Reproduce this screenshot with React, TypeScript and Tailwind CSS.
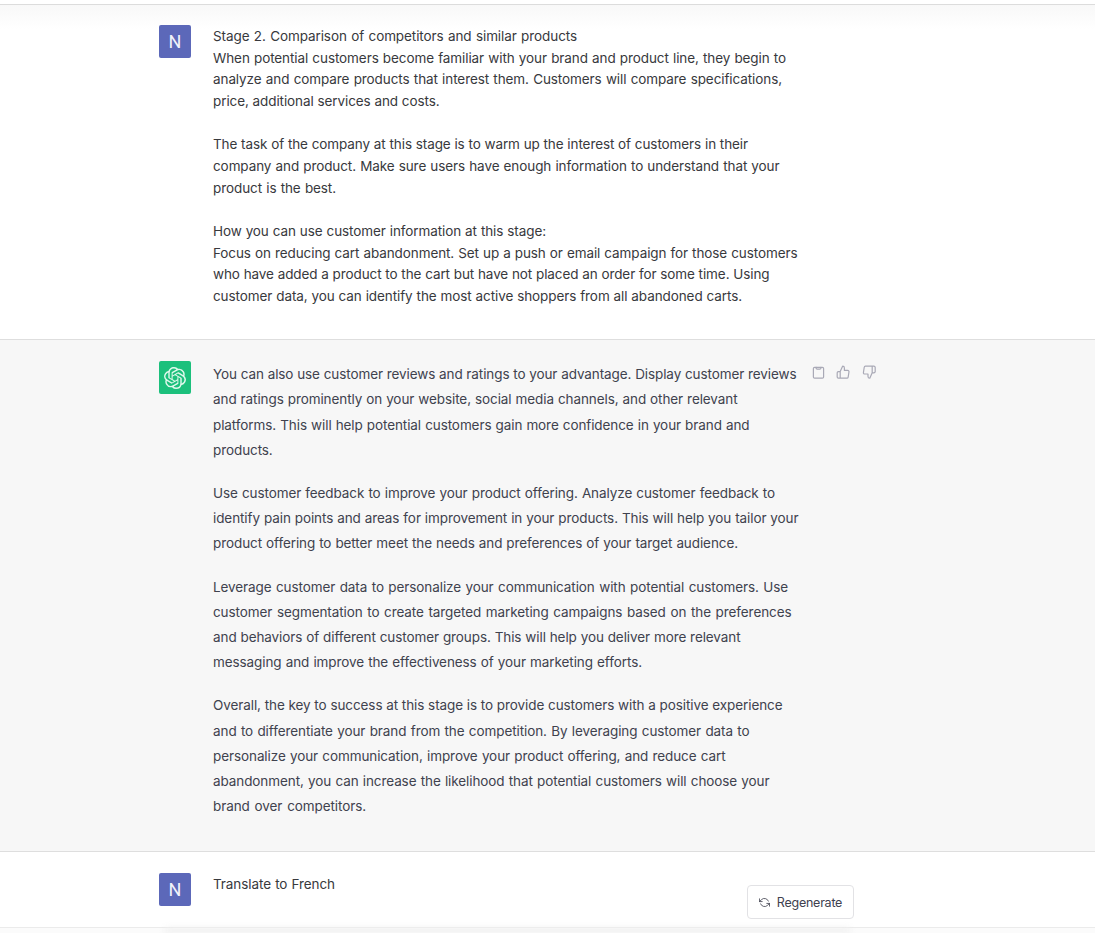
import { type ReactNode } from "react";
import { FiRefreshCcw, FiThumbsDown, FiThumbsUp } from "react-icons/fi";
import { SiOpenai } from "react-icons/si";

type Line = [text: string, width: number];

// Each line carries the width its text is set to, in pixels.
// An empty text is a blank row.
const PROMPT: Line[] = [
    ["Stage 2. Comparison of competitors and similar products", 364],
    ["When potential customers become familiar with your brand and product line, they begin to", 573],
    ["analyze and compare products that interest them. Customers will compare specifications,", 569],
    ["price, additional services and costs.", 226.5],
    ["", 0],
    ["The task of the company at this stage is to warm up the interest of customers in their", 535],
    ["company and product. Make sure users have enough information to understand that your", 566.5],
    ["product is the best.", 123],
    ["", 0],
    ["How you can use customer information at this stage:", 333],
    ["Focus on reducing cart abandonment. Set up a push or email campaign for those customers", 584.5],
    ["who have added a product to the cart but have not placed an order for some time. Using", 556.5],
    ["customer data, you can identify the most active shoppers from all abandoned carts.", 529],
];

const ANSWER: Line[][] = [
    [
        ["You can also use customer reviews and ratings to your advantage. Display customer reviews", 583.5],
        ["and ratings prominently on your website, social media channels, and other relevant", 524.5],
        ["platforms. This will help potential customers gain more confidence in your brand and", 536.5],
        ["products.", 61],
    ],
    [
        ["Use customer feedback to improve your product offering. Analyze customer feedback to", 562],
        ["identify pain points and areas for improvement in your products. This will help you tailor your", 585.5],
        ["product offering to better meet the needs and preferences of your target audience.", 525],
    ],
    [
        ["Leverage customer data to personalize your communication with potential customers. Use", 575],
        ["customer segmentation to create targeted marketing campaigns based on the preferences", 578.5],
        ["and behaviors of different customer groups. This will help you deliver more relevant", 527.5],
        ["messaging and improve the effectiveness of your marketing efforts.", 429],
    ],
    [
        ["Overall, the key to success at this stage is to provide customers with a positive experience", 569.5],
        ["and to differentiate your brand from the competition. By leveraging customer data to", 536.5],
        ["personalize your communication, improve your product offering, and reduce cart", 512.5],
        ["abandonment, you can increase the likelihood that potential customers will choose your", 556.5],
        ["brand over competitors.", 153],
    ],
];

function Lines({ lines }: { lines: Line[] }) {
    return (
        <p className="whitespace-nowrap">
            {lines.map(([text, width], i) => (
                <span
                    key={i}
                    className="block [text-align-last:justify]"
                    style={{ width }}
                >
                    {text || "\u00a0"}
                </span>
            ))}
        </p>
    );
}

function ClipboardIcon() {
    return (
        <svg
            width="14.4"
            height="14.4"
            viewBox="0 0 24 24"
            fill="none"
            stroke="currentColor"
            strokeWidth="2"
            strokeLinecap="round"
            strokeLinejoin="round"
        >
            <rect x="4" y="4" width="17" height="18" rx="2" />
            <path d="M8.5 4v1.2A1.8 1.8 0 0 0 10.3 7h4.4a1.8 1.8 0 0 0 1.8-1.8V4" />
        </svg>
    );
}

function UserAvatar() {
    return (
        <div className="flex h-[33px] w-8 shrink-0 items-center justify-center rounded-[2px] bg-[#5c68b9] font-[Roboto,sans-serif] text-[18px] tracking-normal text-[#f1f2fa]">
            N
        </div>
    );
}

function Row({ avatar, children }: { avatar: ReactNode; children: ReactNode }) {
    return (
        <div className="ml-[159px] flex items-start gap-[22px]">
            {avatar}
            {children}
        </div>
    );
}

export default function App() {
    return (
        <main className="relative flex h-[933px] flex-col overflow-hidden bg-white font-[Inter,sans-serif] text-[13.5px] tracking-[-0.09px] text-[#38393d]">
            <div className="h-[5px] shrink-0 border-b border-[#dcdcdc]" />

            <section className="h-[334px] shrink-0 bg-linear-to-b from-[#f8f8f8] to-white to-[24px] pt-5">
                <Row avatar={<UserAvatar />}>
                    <div className="pt-px leading-[21.65px]">
                        <Lines lines={PROMPT} />
                    </div>
                </Row>
            </section>

            <section className="h-[513px] shrink-0 border-y border-[#dedede] bg-[#f7f7f7] pt-[21px] text-[#40424e]">
                <Row
                    avatar={
                        <div className="flex h-[33px] w-8 shrink-0 items-center justify-center rounded-[2px] bg-[#1cc07c] text-[#e0f8ec]">
                            <SiOpenai size={22} />
                        </div>
                    }
                >
                    <div className="flex w-[578px] flex-col gap-[18px] pt-[1.2px] leading-[25.2px]">
                        {ANSWER.map((lines, i) => (
                            <Lines key={i} lines={lines} />
                        ))}
                    </div>
                    <div className="-ml-[2px] mt-1 flex gap-[11px] text-[#a9a9b6]">
                        <ClipboardIcon />
                        <FiThumbsUp size={14.4} />
                        <FiThumbsDown size={14.4} />
                    </div>
                </Row>
            </section>

            <section className="h-[75px] shrink-0 pt-[21px]">
                <Row avatar={<UserAvatar />}>
                    <div className="pt-px leading-[21.6px]">
                        <Lines lines={[["Translate to French", 122]]} />
                    </div>
                </Row>
            </section>

            <footer className="flex-1 border-t border-[#ebebeb] bg-[#fbfbfb]">
                <div className="ml-[165px] h-full w-[685px] bg-[#efefef] blur-[3px]" />
            </footer>

            <button className="absolute top-[885px] left-[747px] flex h-[34px] w-[107px] items-center justify-center gap-[7px] rounded-[4px] border border-[#e2e2e5] bg-white pt-[2px] text-[12.5px] tracking-[-0.24px] text-[#40414f]">
                <FiRefreshCcw size={11} strokeWidth={1.8} className="-mt-px" />
                Regenerate
            </button>
        </main>
    );
}
